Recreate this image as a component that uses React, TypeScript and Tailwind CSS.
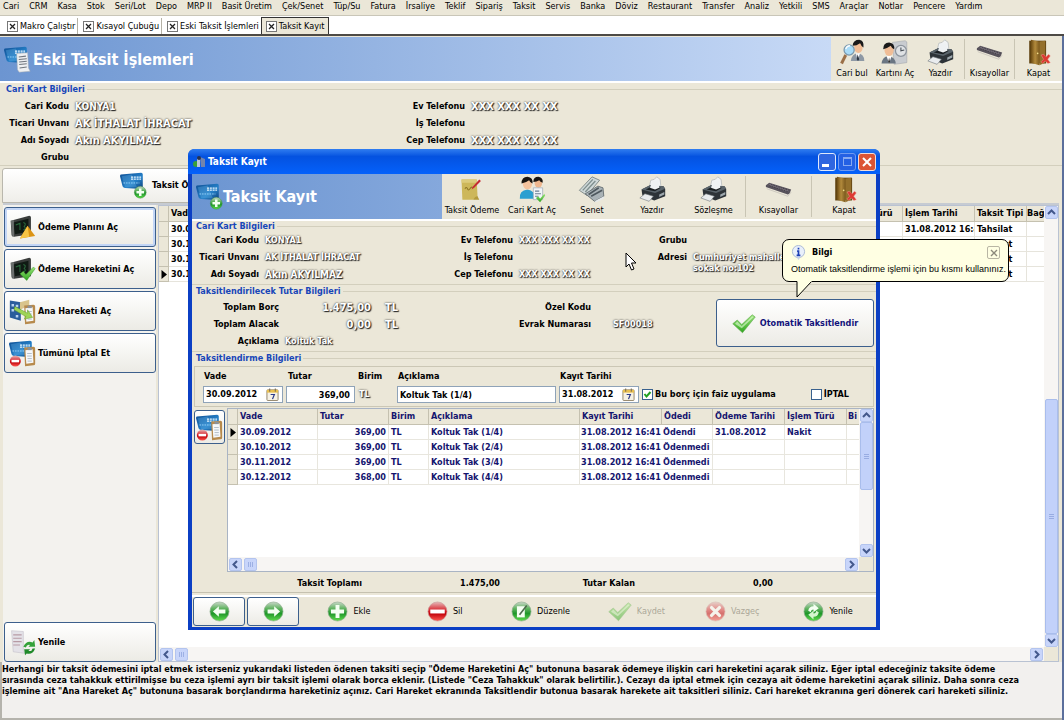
import { useState } from "react";
import type { ReactNode } from "react";
import { clsx } from "clsx";

const MENU = [
  "Cari", "CRM", "Kasa", "Stok", "Seri/Lot", "Depo", "MRP II", "Basit Üretim", "Çek/Senet", "Tüp/Su",
  "Fatura", "İrsaliye", "Teklif", "Sipariş", "Taksit", "Servis", "Banka", "Döviz", "Restaurant",
  "Transfer", "Analiz", "Yetkili", "SMS", "Araçlar", "Notlar", "Pencere", "Yardım",
];

const TABS = ["Makro Çalıştır", "Kısayol Çubuğu", "Eski Taksit İşlemleri", "Taksit Kayıt"];

const INSTALLMENTS = [
  { vade: "30.09.2012", tutar: "369,00", aciklama: "Koltuk Tak (1/4)", odedi: "Ödendi", odeme: "31.08.2012", tur: "Nakit" },
  { vade: "30.10.2012", tutar: "369,00", aciklama: "Koltuk Tak (2/4)", odedi: "Ödenmedi", odeme: "", tur: "" },
  { vade: "30.11.2012", tutar: "369,00", aciklama: "Koltuk Tak (3/4)", odedi: "Ödenmedi", odeme: "", tur: "" },
  { vade: "30.12.2012", tutar: "368,00", aciklama: "Koltuk Tak (4/4)", odedi: "Ödenmedi", odeme: "", tur: "" },
];

/* ---------- icons ---------- */

function Svg({ children, className = "size-[27px]" }: { children: ReactNode; className?: string }) {
  return (
    <svg viewBox="0 0 32 32" className={clsx("shrink-0", className)} aria-hidden="true">
      {children}
    </svg>
  );
}

function Gradients() {
  return (
    <svg className="absolute size-0" aria-hidden="true">
      <defs>
        <linearGradient id="card" x1="0" y1="0" x2="1" y2="1">
          <stop offset="0" stopColor="#0f4f94" />
          <stop offset="0.6" stopColor="#2580c8" />
          <stop offset="1" stopColor="#0d3f78" />
        </linearGradient>
        <linearGradient id="green" x1="0" y1="0" x2="0" y2="1">
          <stop offset="0" stopColor="#c9d6c9" />
          <stop offset="0.35" stopColor="#5fb35f" />
          <stop offset="0.6" stopColor="#1f962a" />
          <stop offset="1" stopColor="#5fdc4c" />
        </linearGradient>
        <linearGradient id="red" x1="0" y1="0" x2="0" y2="1">
          <stop offset="0" stopColor="#e5b9b9" />
          <stop offset="0.45" stopColor="#d8242c" />
          <stop offset="0.6" stopColor="#c00008" />
          <stop offset="1" stopColor="#ff5a52" />
        </linearGradient>
        <linearGradient id="tick" x1="0" y1="0" x2="0" y2="1">
          <stop offset="0" stopColor="#9be57a" />
          <stop offset="1" stopColor="#2fa51f" />
        </linearGradient>
        <linearGradient id="wood" x1="0" y1="0" x2="1" y2="0">
          <stop offset="0" stopColor="#6b4a12" />
          <stop offset="0.5" stopColor="#b28a3c" />
          <stop offset="1" stopColor="#7c5a1e" />
        </linearGradient>
      </defs>
    </svg>
  );
}

function CardShape() {
  return (
    <>
      <path d="M1 3 L25 1 Q27 1 27 3 L27 18 Q27 20 25 20 L6 19 Q4 19 3 17 L0 5 Q0 3 1 3Z" fill="url(#card)" />
      <path d="M2 5 L14 3 L20 18 L6 18Z" fill="#6dbcf0" opacity="0.3" />
      <path d="M13 6 H25 M13 8.500 H25" stroke="#e8f6ff" strokeWidth="1.600" strokeDasharray="2.500 0.800" />
      <path d="M4 13 H23" stroke="#a5dcff" strokeWidth="1" strokeDasharray="2 1" />
    </>
  );
}

function CardAddIcon() {
  return (
    <Svg>
      <CardShape />
      <circle cx="24" cy="24" r="7" fill="url(#green)" stroke="#3c8c3c" strokeWidth="0.500" />
      <path d="M24 19.500 V28.500 M19.500 24 H28.500" stroke="#f2fff0" strokeWidth="3" />
    </Svg>
  );
}

function Sheet() {
  return (
    <>
      <path d="M15 9 L28 8 L29 26 L31 30 L18 31 L16 28Z" fill="#eef0f2" stroke="#a8adb3" strokeWidth="0.600" />
      <path d="M17.500 13 L26 12 M17.500 16 L27 15 M18 19 L27 18 M18 22 L27 21 M18.500 26 L27 25" stroke="#70767e" strokeWidth="1.200" />
    </>
  );
}

function Clipboard() {
  return (
    <>
      <path d="M18 9 L29 8 Q31 8 31 10 L31 28 Q31 30 29 30 L19 31Z" fill="#b78a4c" />
      <path d="M19.500 12 L28 11 L29 27 L20.500 28Z" fill="#f6f8fa" />
      <path d="M22 9 H27 V12 H22Z" fill="#8c9299" />
      <path d="M21.500 16 H27 M21.500 19 H27 M22 22 H27 M22 25 H27" stroke="#a8b4c0" strokeWidth="1" />
    </>
  );
}

function CardSheetIcon() {
  return (
    <Svg>
      <CardShape />
      <Sheet />
    </Svg>
  );
}

function CardCancelIcon() {
  return (
    <Svg>
      <CardShape />
      <Clipboard />
      <circle cx="7.500" cy="25" r="6.500" fill="url(#red)" />
      <path d="M3 25 H12" stroke="#fff" strokeWidth="3" />
    </Svg>
  );
}

function Screen() {
  return (
    <>
      <path d="M2 8 L24 2 Q26 2 26 4 L26 24 L6 27 Q3 27 3 25Z" fill="#3a3d3c" />
      <path d="M5 10 L23 5.500 V21 L7 24Z" fill="#101a14" />
      <path d="M8 13 L13 11 V19 M17 10 Q21 11 18 15 Q21 17 17 19" stroke="#2a6b3d" strokeWidth="1.200" fill="none" />
      <path d="M2 8 L6 7.500 V27 L4 27Z" fill="#8b8f8e" opacity="0.600" />
    </>
  );
}

function ScreenWarnIcon() {
  return (
    <Svg>
      <Screen />
      <path d="M22 14 L31 26 L13 29Z" fill="#dc9414" />
      <path d="M22 14 L24 27 L13 29Z" fill="#f8c444" />
    </Svg>
  );
}

function ScreenTickIcon() {
  return (
    <Svg>
      <Screen />
      <path d="M13 21 L17 18 L20 22 L29 13 L31 15 L21 29Z" fill="url(#tick)" stroke="#2c8a1e" strokeWidth="0.500" />
    </Svg>
  );
}

function MainEntryIcon() {
  return (
    <Svg>
      <path d="M1 3 L14 5 V27 L1 23Z" fill="#2a5c9c" />
      <path d="M3 7 h3 v3 h-3Z M8 8 h3 v3 h-3Z M3 13 h3 v3 h-3Z M8 20 h3 v3 h-3Z" fill="#b7d2f0" />
      <path d="M13 5 L24 2 V9 L13 14Z" fill="#d9c48c" />
      <Clipboard />
      <path d="M7 10 L22 18 V14 L28 23 L18 25 L20 22 L6 14Z" fill="#9ed457" stroke="#5f9c28" strokeWidth="0.600" />
    </Svg>
  );
}

function RefreshSheetIcon() {
  return (
    <Svg>
      <path d="M3 2 L17 3 L17 26 L20 29 L5 27Z" fill="#e4e2e8" stroke="#bdbac4" strokeWidth="0.600" />
      <path d="M5 7 H15 M5 11 H15 M5 15 H15 M5 19 H13" stroke="#b79aa4" strokeWidth="1.400" />
      <path d="M17 21 Q21 13 28 16 L30 13 L31 21 L23 21 L25 19 Q21 18 20 22Z" fill="#35a23a" />
      <path d="M31 23 Q28 31 21 29 L19 31 L18 24 L25 24 L23 26 Q27 27 28 23Z" fill="#218a2b" />
    </Svg>
  );
}

function PersonSearchIcon() {
  return (
    <Svg>
      <path d="M14 26 Q15 18 22 17 Q30 18 30 26Z" fill="#8e99a5" />
      <path d="M20 17 L22 25 L25 17Z" fill="#fff" />
      <path d="M22 18 l-1 6 1.500 2 1.500-2Z" fill="#2b3440" />
      <ellipse cx="23" cy="10" rx="5" ry="6.500" fill="#f0bd96" />
      <path d="M16 8 Q17 1 24 1 Q30 2 29 10 Q26 8 25 5 Q21 8 16 8Z" fill="#191919" />
      <circle cx="12" cy="13" r="6" fill="#a9dcf8" stroke="#7b99ae" strokeWidth="1.500" />
      <path d="M8 12 Q9 8 13 8" stroke="#fff" strokeWidth="1.500" fill="none" />
      <path d="M8 19 L3 29" stroke="#9b7049" strokeWidth="3.500" />
    </Svg>
  );
}

function PersonClockIcon() {
  return (
    <Svg className="h-[27px] w-[30px]">
      <path d="M13 4 L28 2 Q31 3 30 6 V28 L15 30Z" fill="#c9ccd0" stroke="#9da2a8" strokeWidth="0.600" />
      <circle cx="23" cy="14" r="6.500" fill="#dfe2e5" stroke="#8d949c" strokeWidth="1.500" />
      <path d="M23 10 V14 L27 13" stroke="#4a5158" strokeWidth="1.300" fill="none" />
      <path d="M0 29 Q1 21 8 20 Q16 21 17 29Z" fill="#6b7683" />
      <path d="M6 20 L9 29 L12 20Z" fill="#fff" />
      <path d="M9 22 L8 27 L9 29 L10 27Z" fill="#222" />
      <ellipse cx="9" cy="13" rx="5.500" ry="7" fill="#f0bd96" />
      <path d="M2 12 Q2 4 9 4 Q16 5 15 12 Q12 11 11 8 Q7 11 2 12Z" fill="#191919" />
    </Svg>
  );
}

function PeopleIcon() {
  return (
    <Svg>
      <ellipse cx="23" cy="8" rx="4.500" ry="6" fill="#eeb68e" />
      <path d="M17 7 Q17 1 23 1 Q29 2 28 8 Q25 7 24 5 Q21 7 17 7Z" fill="#17130f" />
      <path d="M1 27 Q0 17 10 16 Q19 17 19 27Z" fill="#2b9fd0" />
      <ellipse cx="10" cy="9" rx="5.500" ry="7" fill="#f4c39d" />
      <path d="M3 9 Q3 1 10 1 Q17 2 16 9 Q13 8 12 5 Q8 8 3 9Z" fill="#17130f" />
      <path d="M17 14 H28 V28 H17Z" fill="#f1f4f8" stroke="#9aa7b4" strokeWidth="0.800" />
      <path d="M19 18 H24 M19 21 H26 M19 24 H23" stroke="#6b7d91" strokeWidth="1.400" />
      <path d="M20 26 L23 24 L25 27 L30 21 L31 23 L25 31Z" fill="url(#tick)" />
    </Svg>
  );
}

function PrinterIcon() {
  return (
    <Svg>
      <path d="M12 14 L14 5 L18 4 L21 1 L25 4 L26 13Z" fill="#f1f3f4" stroke="#a7adb1" strokeWidth="0.700" />
      <path d="M3 16 L13 11 L29 12 L31 15 L31 24 L18 29 L4 23Z" fill="#2d3338" />
      <path d="M3 16 L13 11 L29 12 L31 15 L19 20Z" fill="#59636a" />
      <path d="M8 16 L14 13 L26 14 L19 18Z" fill="#1a1f23" />
      <path d="M13 14 L16 6 L23 5 L24 14 L19 16Z" fill="#eef1f3" />
      <path d="M24 22 L30 19 V22 L24 25Z" fill="#9ea8ae" />
      <path d="M1 26 L7 21 L17 24 L12 30Z" fill="#e9ecee" stroke="#6f767b" strokeWidth="0.700" />
    </Svg>
  );
}

function KeyboardIcon() {
  return (
    <Svg>
      <path d="M1 11 L5 8 L31 16 L29 21 L27 22 L1 13Z" fill="#57525b" />
      <path d="M4 11 L6 9 L29 16.500 L27 19Z" fill="#756f79" />
      <path d="M5 11.500 L27 18.500 M7 10 L29 17" stroke="#3c3841" strokeWidth="1" strokeDasharray="2 1" />
      <path d="M2 15 L27 24 L31 19" stroke="#c9c4bb" strokeWidth="1" fill="none" />
    </Svg>
  );
}

function DoorIcon() {
  return (
    <Svg>
      <path d="M5 2 H25 V29 H5Z" fill="#5f4210" />
      <path d="M7 1 L17 3 V31 L7 28Z" fill="url(#wood)" />
      <path d="M17 3 L24 2 V28 L17 31Z" fill="#94702c" />
      <circle cx="15" cy="17" r="1" fill="#f2de8a" />
      <path d="M19 19 L22 18 L25 21 L28 18 L30 20 L27 24 L30 28 L27 29 L24 26 L21 29 L19 27 L22 24Z" fill="#dd3a33" stroke="#f4a49c" strokeWidth="0.500" />
    </Svg>
  );
}

function NoteIcon() {
  return (
    <Svg>
      <path d="M3 4 L21 4 L22 25 L17 28 L4 28Z" fill="#cdb75a" />
      <path d="M3 4 H21 L21 8 H3Z" fill="#dccb7c" />
      <path d="M7 15 q2-3 3 0 t3 0 t3-1" stroke="#8c7424" strokeWidth="1.200" fill="none" />
      <path d="M4 28 H24 L22 24 Q19 24 17 28Z" fill="#b39a3c" />
      <path d="M15 16 L16 13 L24 4 L26 6 L18 14Z" fill="#c52b32" />
    </Svg>
  );
}

function BillIcon() {
  return (
    <Svg className="h-[27px] w-[30px]">
      <path d="M1 17 L16 1 L25 5 L10 23Z" fill="#cfd8d8" stroke="#75807f" strokeWidth="1" />
      <path d="M5 17 L17 4 M8 19 L20 6" stroke="#7f8f8e" strokeWidth="1.600" />
      <path d="M8 21 L23 12 L29 14 L30 24 L19 30Z" fill="#a9b2b6" stroke="#5d666b" strokeWidth="1" />
      <path d="M12 22 L24 14 M15 24 L28 17" stroke="#4e585e" strokeWidth="2" />
      <path d="M19 30 L30 24 V27 L21 31Z" fill="#e5e9ea" />
    </Svg>
  );
}

function TickIcon({ className = "size-[24px]" }: { className?: string }) {
  return (
    <Svg className={className}>
      <path d="M1 17 L7 12 L13 18 L27 5 L31 8 L14 29Z" fill="url(#tick)" stroke="#62a84f" strokeWidth="0.800" />
      <path d="M4 17 L7 14 L13 20 L27 7 L29 8 L13 23Z" fill="#e4fbd8" opacity="0.600" />
    </Svg>
  );
}

function Ball({ tone, children }: { tone: "green" | "red"; children: ReactNode }) {
  return (
    <Svg className="size-[21px]">
      <circle cx="16" cy="16" r="14.500" fill={tone === "green" ? "url(#green)" : "url(#red)"} stroke={tone === "green" ? "#8fae8f" : "#c99"} strokeWidth="1" />
      {children}
    </Svg>
  );
}

const ballIcons = {
  left: <Ball tone="green"><path d="M6 16 L15 8 V13 H25 V19 H15 V24Z" fill="#f4fff2" /></Ball>,
  right: <Ball tone="green"><path d="M26 16 L17 8 V13 H7 V19 H17 V24Z" fill="#f4fff2" /></Ball>,
  add: <Ball tone="green"><path d="M13 6 H19 V13 H26 V19 H19 V26 H13 V19 H6 V13 H13Z" fill="#f4fff2" /></Ball>,
  remove: <Ball tone="red"><path d="M5 13 H27 V19 H5Z" fill="#fff" /></Ball>,
  edit: (
    <Ball tone="green">
      <path d="M9 8 H21 V25 H9Z" fill="#f4fff2" />
      <path d="M13 21 L24 7" stroke="#4c6b4c" strokeWidth="2.500" />
    </Ball>
  ),
  cancel: <Ball tone="red"><path d="M10 10 L22 22 M22 10 L10 22" stroke="#fff" strokeWidth="5" strokeLinecap="round" /></Ball>,
  refresh: (
    <Ball tone="green">
      <path d="M8 15 Q9 8 16 8 V4 L24 11 L16 17 V13 Q12 13 12 17Z" fill="#f4fff2" />
      <path d="M24 17 Q23 24 16 24 V28 L8 21 L16 15 V19 Q20 19 20 15Z" fill="#d5f5cf" />
    </Ball>
  ),
};

function CalendarIcon() {
  return (
    <svg viewBox="0 0 14 14" className="size-[13px] shrink-0" aria-hidden="true">
      <rect x="1" y="2" width="12" height="11.500" rx="1" fill="#f6f1e4" stroke="#8f8064" />
      <rect x="1" y="2" width="12" height="3" fill="#e8bf50" />
      <path d="M4 0.500 V4 M10 0.500 V4" stroke="#6d6250" />
      <path d="M5 7 H9 L7 12" stroke="#2b3a8a" strokeWidth="1.300" fill="none" />
    </svg>
  );
}

/* ---------- small controls ---------- */

const ARROWS = {
  up: "M3 8 L6.500 4.500 L10 8",
  down: "M3 5 L6.500 8.500 L10 5",
  left: "M8 3 L4.500 6.500 L8 10",
  right: "M5 3 L8.500 6.500 L5 10",
};

function ScrollButton({ dir, label }: { dir: keyof typeof ARROWS; label: string }) {
  return (
    <button aria-label={label} className="size-[13px] shrink-0 rounded-[2px] border border-[#b3c4ee] bg-[#c8d5fa]">
      <svg viewBox="0 0 13 13" className="-m-px size-[13px]">
        <path d={ARROWS[dir]} stroke="#43588c" strokeWidth="2" fill="none" />
      </svg>
    </button>
  );
}

function HScroll() {
  return (
    <div className="flex h-[14px] shrink-0 items-center gap-[2px] bg-[#f7f5f3] px-px">
      <ScrollButton dir="left" label="Sola kaydır" />
      <div className="flex h-[13px] w-[13px] items-center justify-center gap-px rounded-[2px] border border-[#b3c4ee] bg-[#c8d5fa]">
        <i className="h-[5px] w-px bg-[#9db0e4]" />
        <i className="h-[5px] w-px bg-[#9db0e4]" />
        <i className="h-[5px] w-px bg-[#9db0e4]" />
      </div>
      <div className="ml-auto flex">
        <ScrollButton dir="right" label="Sağa kaydır" />
      </div>
    </div>
  );
}

function Thumb({ className }: { className: string }) {
  return (
    <div className={clsx("flex w-[13px] flex-col items-center justify-center gap-px rounded-[2px] border border-[#a9bdec] bg-[#c2d1fa]", className)}>
      <i className="h-px w-[5px] bg-[#98ace2]" />
      <i className="h-px w-[5px] bg-[#98ace2]" />
      <i className="h-px w-[5px] bg-[#98ace2]" />
    </div>
  );
}

function ToolButton({ icon, label, className }: { icon: ReactNode; label: string; className: string }) {
  return (
    <button className={clsx("flex flex-col items-center gap-[2px] pt-[2px] whitespace-nowrap", className)}>
      {icon}
      <span>{label}</span>
    </button>
  );
}

function Separator() {
  return <div className="my-[2px] w-px shrink-0 bg-[#c9c5b4]" />;
}

// White lettering that stands off the panel with a dark soft shadow
function Glow({ children, className }: { children: ReactNode; className?: string }) {
  return (
    <span className={clsx("font-bold whitespace-nowrap text-white [text-shadow:1px_1px_1px_#222,0_0_2px_#222]", className)}>
      {children}
    </span>
  );
}

function Group({ title, children, className }: { title: string; children: ReactNode; className?: string }) {
  return (
    <section className={clsx("relative shrink-0", className)}>
      <div className="flex h-[11px] items-center gap-[2px] pl-1">
        <h2 className="font-bold text-[#1746b8]">{title}</h2>
        <div className="h-px flex-1 bg-[#d3cfbd]" />
      </div>
      {children}
    </section>
  );
}

const FRAME = "rounded-[3px] border border-[#3c5f8c] bg-gradient-to-b from-white to-[#ecebe5]";

function SideButton({ icon, label, active }: { icon: ReactNode; label: string; active?: boolean }) {
  return (
    <button
      className={clsx(
        FRAME,
        "flex h-[40px] w-full shrink-0 items-center gap-[2px] pl-[4px] font-bold",
        active && "shadow-[inset_0_0_0_2px_#c3d6f6]"
      )}
    >
      {icon}
      {label}
    </button>
  );
}

/* ---------- background screen ---------- */

function MainHeader() {
  return (
    <header className="flex h-[46px] shrink-0 border-b-2 border-white">
      <div className="flex flex-1 items-center gap-[2px] bg-gradient-to-r from-[#6c95d1] to-[#c8daf6] pl-1">
        <CardSheetIcon />
        <h1 className="text-[16px] font-bold text-white">Eski Taksit İşlemleri</h1>
      </div>
      <ToolButton className="w-[42px]" icon={<PersonSearchIcon />} label="Cari bul" />
      <ToolButton className="w-[44px]" icon={<PersonClockIcon />} label="Kartını Aç" />
      <ToolButton className="w-[47px]" icon={<PrinterIcon />} label="Yazdır" />
      <Separator />
      <ToolButton className="w-[49px]" icon={<KeyboardIcon />} label="Kısayollar" />
      <Separator />
      <ToolButton className="w-[47px]" icon={<DoorIcon />} label="Kapat" />
    </header>
  );
}

function RowMarker() {
  return (
    <svg viewBox="0 0 6 9" className="mx-auto h-[9px] w-[6px]" aria-hidden="true">
      <path d="M0.500 0 L6 4.500 L0.500 9Z" fill="#000" />
    </svg>
  );
}

function MainTable() {
  const head = "h-[16px] overflow-hidden border-r border-b border-[#c5c1b0] bg-[#ebe7d8] px-[2px] text-left font-bold";
  const cell = "h-[15px] overflow-hidden border-r border-b border-[#e6e4dc] px-[2px]";
  return (
    <table className="w-full table-fixed border-separate border-spacing-0 font-bold whitespace-nowrap">
      <colgroup>
        <col className="w-[10px]" />
        <col className="w-[80px]" />
        <col />
        <col className="w-[60px]" />
        <col className="w-[72px]" />
        <col className="w-[52px]" />
        <col className="w-[17px]" />
      </colgroup>
      <thead>
        <tr>
          <th className={head} />
          <th className={head}>Vade</th>
          <th className={head} />
          <th className={head}>İşlem Türü</th>
          <th className={head}>İşlem Tarihi</th>
          <th className={head}>Taksit Tipi</th>
          <th className="h-[16px] overflow-hidden border-b border-[#c5c1b0] bg-[#ebe7d8] p-0 text-left">Bağ</th>
        </tr>
      </thead>
      <tbody>
        {INSTALLMENTS.map((row, i) => (
          <tr key={row.vade}>
            <td className="h-[15px] border-r border-b border-[#c5c1b0] bg-[#ebe7d8] p-0">
              {i === 3 && <RowMarker />}
            </td>
            <td className={cell}>{row.vade}</td>
            <td className={cell} />
            <td className={cell} />
            <td className={cell}>31.08.2012 16:41</td>
            <td className={cell}>Tahsilat</td>
            <td className="border-b border-[#e6e4dc]" />
          </tr>
        ))}
      </tbody>
    </table>
  );
}

function CustomerInfo() {
  return (
    <Group title="Cari Kart Bilgileri" className="h-[83px] border-b border-[#d3cfbd] pt-px pl-[2px]">
      <div className="grid grid-cols-[67px_322px_62px_1fr] gap-x-[6px] pt-[3px] text-right leading-[17px] font-bold">
        <span>Cari Kodu</span>
        <Glow className="text-left text-[10px]">KONYA1</Glow>
        <span className="justify-self-end whitespace-nowrap">Ev Telefonu</span>
        <Glow className="text-left text-[11px]">XXX XXX XX XX</Glow>
        <span className="justify-self-end whitespace-nowrap">Ticari Unvanı</span>
        <Glow className="text-left text-[11px]">AK İTHALAT İHRACAT</Glow>
        <span className="justify-self-end whitespace-nowrap">İş Telefonu</span>
        <span />
        <span>Adı Soyadı</span>
        <Glow className="text-left text-[11px]">Akın AKYILMAZ</Glow>
        <span className="justify-self-end whitespace-nowrap">Cep Telefonu</span>
        <Glow className="text-left text-[11px]">XXX XXX XX XX</Glow>
        <span>Grubu</span>
      </div>
    </Group>
  );
}

/* ---------- Taksit Kayıt window ---------- */

function ModalTitle() {
  const box = "flex size-[18px] items-center justify-center rounded-[3px] border";
  return (
    <div className="flex h-[25px] shrink-0 items-center gap-[2px] rounded-t-[6px] bg-gradient-to-b from-[#2f7df0] via-[#0452e0] via-30% to-[#0461fb] pr-[4px] pl-1">
      <svg viewBox="0 0 14 14" className="size-[14px]" aria-hidden="true">
        <circle cx="4" cy="9" r="3" fill="#3aa03a" />
        <path d="M5 12 V4 L8 2 V12Z" fill="#b9c7dd" />
        <path d="M8 2 L13 4 V12 H9Z" fill="#7384ac" />
        <circle cx="7" cy="3" r="2" fill="#27324e" />
      </svg>
      <h2 className="flex-1 text-[10px] font-bold text-white">Taksit Kayıt</h2>
      <button aria-label="Simge durumuna küçült" className={clsx(box, "border-[#dfe8fb] bg-[#2f66e0]")}>
        <i className="mt-[7px] -ml-[3px] h-[3px] w-[7px] bg-white" />
      </button>
      <button aria-label="Ekranı kapla" className={clsx(box, "border-[#6f9af0] bg-[#2460e4]")}>
        <i className="size-[9px] border border-t-2 border-[#86a9f2]" />
      </button>
      <button aria-label="Pencereyi kapat" className={clsx(box, "border-[#f3dcd6] bg-[#dc5535]")}>
        <svg viewBox="0 0 12 12" className="size-[12px]">
          <path d="M2 2 L10 10 M10 2 L2 10" stroke="#fff" strokeWidth="2" />
        </svg>
      </button>
    </div>
  );
}

function ModalHeader() {
  return (
    <div className="flex h-[47px] shrink-0 border-b-2 border-white">
      <div className="flex flex-1 items-center bg-gradient-to-r from-[#6c95d1] to-[#85a8dc] pl-1">
        <CardAddIcon />
        <h2 className="text-[16px] font-bold text-white">Taksit Kayıt</h2>
      </div>
      <ToolButton className="w-[60px]" icon={<NoteIcon />} label="Taksit Ödeme" />
      <ToolButton className="w-[60px]" icon={<PeopleIcon />} label="Cari Kart Aç" />
      <ToolButton className="w-[60px]" icon={<BillIcon />} label="Senet" />
      <ToolButton className="w-[60px]" icon={<PrinterIcon />} label="Yazdır" />
      <ToolButton className="w-[63px]" icon={<PrinterIcon />} label="Sözleşme" />
      <Separator />
      <ToolButton className="w-[65px]" icon={<KeyboardIcon />} label="Kısayollar" />
      <Separator />
      <ToolButton className="w-[64px]" icon={<DoorIcon />} label="Kapat" />
    </div>
  );
}

function AmountInfo() {
  return (
    <Group title="Taksitlendirilecek Tutar Bilgileri" className="mb-px h-[66px] border-b border-[#d3cfbd]">
      <div className="flex pt-[2px] font-bold">
        <div className="grid w-[320px] grid-cols-[87px_86px_1fr] items-center gap-x-[6px] text-right leading-[17px]">
          <span>Toplam Borç</span>
          <Glow className="text-[11px]">1.475,00</Glow>
          <Glow className="pl-[8px] text-left text-[11px]">TL</Glow>
          <span>Toplam Alacak</span>
          <Glow className="text-[11px]">0,00</Glow>
          <Glow className="pl-[8px] text-left text-[11px]">TL</Glow>
          <span>Açıklama</span>
          <Glow className="text-left">Koltuk Tak</Glow>
        </div>
        <div className="grid w-[200px] grid-cols-[79px_1fr] content-start gap-x-[22px] text-right leading-[17px]">
          <span>Özel Kodu</span>
          <span />
          <span className="whitespace-nowrap">Evrak Numarası</span>
          <Glow className="text-left">SF00018</Glow>
        </div>
        <button className={clsx(FRAME, "mr-[2px] ml-auto flex h-[48px] w-[158px] items-center justify-center gap-[4px] text-[#12127a]")}>
          <TickIcon />
          Otomatik Taksitlendir
        </button>
      </div>
    </Group>
  );
}

const INPUT = "h-[17px] border border-[#8fa3b8] bg-white px-[2px] font-bold outline-none";

function DateInput({ id, value }: { id: string; value: string }) {
  return (
    <div className="flex h-[17px] w-[80px] items-center border border-[#8fa3b8] bg-white pr-[3px]">
      <input id={id} defaultValue={value} className="w-full min-w-0 px-[2px] font-bold outline-none" />
      <CalendarIcon />
    </div>
  );
}

function Check({ label, checked }: { label: string; checked?: boolean }) {
  return (
    <label className="flex h-[17px] items-center gap-[2px] font-bold whitespace-nowrap">
      <span className="relative size-[11px]">
        <input type="checkbox" defaultChecked={checked} className="peer block size-[11px] appearance-none border border-[#39618e] bg-white" />
        <svg viewBox="0 0 11 11" className="pointer-events-none absolute inset-0 hidden size-[11px] peer-checked:block">
          <path d="M2.500 5 L4.500 7.500 L8.500 3" stroke="#21a121" strokeWidth="2" fill="none" />
        </svg>
      </span>
      {label}
    </label>
  );
}

function InstallmentForm() {
  return (
    <div className="mx-[2px] mt-[2px] flex h-[41px] shrink-0 items-end gap-[3px] border border-[#cbc7b5] pb-[3px] pl-[8px] font-bold">
      <div className="flex flex-col gap-[4px]">
        <label htmlFor="vade" className="pl-px">Vade</label>
        <DateInput id="vade" value="30.09.2012" />
      </div>
      <div className="flex flex-col gap-[4px]">
        <label htmlFor="tutar" className="pl-[2px]">Tutar</label>
        <input id="tutar" defaultValue="369,00" className={clsx(INPUT, "w-[69px] pr-[4px] text-right")} />
      </div>
      <div className="flex w-[36px] flex-col gap-[4px]">
        <span>Birim</span>
        <Glow className="h-[17px] pl-px leading-[17px]">TL</Glow>
      </div>
      <div className="flex flex-1 flex-col gap-[4px]">
        <label htmlFor="aciklama" className="pl-px">Açıklama</label>
        <input id="aciklama" defaultValue="Koltuk Tak (1/4)" className={clsx(INPUT, "w-full")} />
      </div>
      <div className="flex flex-col gap-[4px]">
        <label htmlFor="kayit" className="pl-px">Kayıt Tarihi</label>
        <DateInput id="kayit" value="31.08.2012" />
      </div>
      <Check label="Bu borç için faiz uygulama" checked />
      <div className="mr-[24px] ml-[32px]">
        <Check label="İPTAL" />
      </div>
    </div>
  );
}

function InstallmentTable() {
  const head = "h-[16px] overflow-hidden border-r border-b border-[#c5c1b0] bg-[#ebe7d8] px-[2px] text-left";
  const cell = "h-[15px] border-r border-b border-[#e8e6de] px-[2px]";
  return (
    <table className="w-full table-fixed border-separate border-spacing-0 font-bold whitespace-nowrap text-[#14146e]">
      <colgroup>
        <col className="w-[10px]" />
        <col className="w-[80px]" />
        <col className="w-[71px]" />
        <col className="w-[40px]" />
        <col />
        <col className="w-[82px]" />
        <col className="w-[51px]" />
        <col className="w-[72px]" />
        <col className="w-[62px]" />
        <col className="w-[12px]" />
      </colgroup>
      <thead>
        <tr>
          <th className={head} />
          <th className={head}>Vade</th>
          <th className={head}>Tutar</th>
          <th className={head}>Birim</th>
          <th className={head}>Açıklama</th>
          <th className={head}>Kayıt Tarihi</th>
          <th className={head}>Ödedi</th>
          <th className={head}>Ödeme Tarihi</th>
          <th className={head}>İşlem Türü</th>
          <th className="h-[16px] overflow-hidden border-b border-[#c5c1b0] bg-[#ebe7d8] p-0 pl-px text-left">Bi</th>
        </tr>
      </thead>
      <tbody>
        {INSTALLMENTS.map((row, i) => (
          <tr key={row.vade}>
            <td className="h-[15px] border-r border-b border-[#c5c1b0] bg-[#ebe7d8] p-0">
              {i === 0 && <RowMarker />}
            </td>
            <td className={cell}>{row.vade}</td>
            <td className={clsx(cell, "text-right")}>{row.tutar}</td>
            <td className={cell}>TL</td>
            <td className={cell}>{row.aciklama}</td>
            <td className="border-b border-[#e8e6de] p-0 pl-px">31.08.2012 16:41</td>
            <td className="border-r border-b border-[#e8e6de] p-0 pl-px">{row.odedi}</td>
            <td className={cell}>{row.odeme}</td>
            <td className={cell}>{row.tur}</td>
            <td className="border-b border-[#e8e6de] p-0" />
          </tr>
        ))}
      </tbody>
    </table>
  );
}

function NavBar() {
  const actions = [
    { label: "Ekle", icon: ballIcons.add },
    { label: "Sil", icon: ballIcons.remove },
    { label: "Düzenle", icon: ballIcons.edit },
    { label: "Kaydet", icon: <TickIcon />, disabled: true },
    { label: "Vazgeç", icon: ballIcons.cancel, disabled: true },
    { label: "Yenile", icon: ballIcons.refresh },
  ];
  return (
    <div className="flex h-[32px] shrink-0 gap-[2px] border-t-2 border-white pl-px">
      <button aria-label="Önceki" className={clsx(FRAME, "flex h-[29px] w-[52px] items-center justify-center")}>
        {ballIcons.left}
      </button>
      <button aria-label="Sonraki" className={clsx(FRAME, "flex h-[29px] w-[52px] items-center justify-center")}>
        {ballIcons.right}
      </button>
      <div className="flex flex-1 pb-[2px]">
        {actions.map((a) => (
          <button
            key={a.label}
            disabled={a.disabled}
            className="flex flex-1 items-center justify-center gap-[5px] disabled:text-[#aca899] disabled:[&>svg]:opacity-50"
          >
            {a.icon}
            {a.label}
          </button>
        ))}
      </div>
    </div>
  );
}

function TaksitKayit() {
  return (
    <div role="dialog" aria-label="Taksit Kayıt" className="absolute top-[149px] left-[188px] flex h-[481px] w-[692px] flex-col rounded-t-[7px] bg-[#0b3fc4]">
      <ModalTitle />
      <div className="mr-[4px] mb-[3px] ml-[4px] flex min-h-0 flex-1 flex-col bg-[#ebe7d8]">
        <ModalHeader />
        <Group title="Cari Kart Bilgileri" className="mb-px h-[64px] border-b border-[#d3cfbd]">
          <div className="flex font-bold">
            <div className="grid w-[255px] grid-cols-[67px_1fr] gap-x-[6px] text-right leading-[17px]">
              <span>Cari Kodu</span>
              <Glow className="text-left">KONYA1</Glow>
              <span className="justify-self-end whitespace-nowrap">Ticari Unvanı</span>
              <Glow className="text-left">AK İTHALAT İHRACAT</Glow>
              <span>Adı Soyadı</span>
              <Glow className="text-left text-[10px]">Akın AKYILMAZ</Glow>
            </div>
            <div className="grid w-[200px] grid-cols-[66px_1fr] content-start gap-x-[6px] text-right leading-[17px]">
              <span>Ev Telefonu</span>
              <Glow className="text-left">XXX XXX XX XX</Glow>
              <span>İş Telefonu</span>
              <span />
              <span>Cep Telefonu</span>
              <Glow className="text-left">XXX XXX XX XX</Glow>
            </div>
            <div className="grid grid-cols-[40px_1fr] content-start gap-x-[6px] text-right leading-[17px]">
              <span>Grubu</span>
              <span />
              <span>Adresi</span>
              <Glow className="pt-[3px] text-left leading-[11px]">
                Cumhuriyet mahallesi
                <br />
                sokak no:102
              </Glow>
            </div>
          </div>
        </Group>
        <AmountInfo />
        <Group title="Taksitlendirme Bilgileri">
          <InstallmentForm />
        </Group>
        <div className="mt-px mr-[2px] flex min-h-0 flex-1">
          <div className="w-[36px] shrink-0 border-r border-[#a9b4c4] pt-[2px] pl-[2px]">
            <button aria-label="Taksiti iptal et" className={clsx(FRAME, "flex h-[34px] w-[31px] items-center justify-center")}>
              <CardCancelIcon />
            </button>
          </div>
          <div className="flex min-w-0 flex-1 flex-col border-t border-r border-b border-[#a9b4c4] bg-white">
            <div className="flex min-h-0 flex-1">
              <div className="min-w-0 flex-1">
                <InstallmentTable />
              </div>
              <div className="flex w-[14px] flex-col items-center bg-[#f7f5f3]">
                <ScrollButton dir="up" label="Yukarı kaydır" />
                <Thumb className="h-[68px]" />
                <div className="mt-auto flex">
                  <ScrollButton dir="down" label="Aşağı kaydır" />
                </div>
              </div>
            </div>
            <div className="bg-[#ebe7d8] pr-[14px]">
              <HScroll />
            </div>
          </div>
        </div>
        <div className="grid h-[21px] shrink-0 grid-cols-[170px_138px_135px_138px] items-center border-b border-[#c5c1b0] pt-[2px] text-right font-bold">
          <span>Taksit Toplamı</span>
          <span>1.475,00</span>
          <span>Tutar Kalan</span>
          <span>0,00</span>
        </div>
        <div className="h-[2px] shrink-0" />
        <NavBar />
      </div>
    </div>
  );
}

function InfoBalloon({ onClose }: { onClose: () => void }) {
  return (
    <div role="status" className="absolute top-[239px] left-[782px] w-[227px] rounded-[7px] border border-black bg-[#ffffe3] px-[8px] pt-[5px] pb-[6px]">
      <div className="flex items-center gap-[6px]">
        <svg viewBox="0 0 16 16" className="size-[15px]" aria-hidden="true">
          <circle cx="8" cy="7" r="6.500" fill="#e9f0fb" stroke="#a9b8d4" />
          <path d="M6 13 L8 16 L10 13Z" fill="#c5d2ea" />
          <path d="M8 3 V4.800 M6.500 6.500 H8 V11 M6 11 H10" stroke="#1c3fb4" strokeWidth="1.800" fill="none" />
        </svg>
        <strong className="flex-1">Bilgi</strong>
        <button aria-label="Kapat" onClick={onClose} className="flex size-[13px] items-center justify-center rounded-[2px] border border-[#b9b6a4]">
          <svg viewBox="0 0 8 8" className="size-[8px]">
            <path d="M1 1 L7 7 M7 1 L1 7" stroke="#8d8a7c" strokeWidth="1.400" />
          </svg>
        </button>
      </div>
      <p className="mt-[4px] font-['Liberation_Sans',sans-serif] whitespace-nowrap">
        Otomatik taksitlendirme işlemi için bu kısmı kullanınız.
      </p>
      <svg viewBox="0 0 18 18" className="absolute top-full left-[13px] size-[18px]" aria-hidden="true">
        <path d="M1 0 V16 L16 0" fill="#ffffe3" stroke="#000" />
        <path d="M1.500 0 H15.500" stroke="#ffffe3" strokeWidth="2" />
      </svg>
    </div>
  );
}

function Cursor() {
  return (
    <svg viewBox="0 0 12 19" className="absolute top-[252px] left-[625px] h-[19px] w-[12px]" aria-hidden="true">
      <path d="M1 1 V15 L4 12 L6.500 18 L9 17 L6.500 11 H11Z" fill="#fff" stroke="#000" />
    </svg>
  );
}

export default function App() {
  const [activeTab, setActiveTab] = useState("Taksit Kayıt");
  const [showInfo, setShowInfo] = useState(true);

  return (
    <div className="relative flex min-h-screen flex-col overflow-hidden bg-[#ebe7d8] font-['DejaVu_Sans_Condensed','DejaVu_Sans',sans-serif] text-[9px] leading-[11px] text-black">
      <Gradients />

      <nav className="flex h-[16px] shrink-0 gap-[10px] border-b border-[#c9c6b8] pl-[3px] whitespace-nowrap">
        {MENU.map((item) => (
          <button key={item} className="h-[12px]">
            {item}
          </button>
        ))}
      </nav>

      <div className="flex h-[20px] shrink-0 items-end border-b-2 border-[#4d4a45] bg-white pl-[2px]">
        {TABS.map((tab, i) => (
          <button
            key={tab}
            onClick={() => setActiveTab(tab)}
            className={clsx(
              "flex items-center gap-[2px] whitespace-nowrap",
              activeTab === tab
                ? "h-[17px] border border-b-0 border-[#333] bg-[#ebe7d8] px-[4px]"
                : "h-[16px] pr-[2px] pl-[5px]",
              activeTab !== tab && i < 2 && "border-r border-[#b5b2a6]"
            )}
          >
            <svg viewBox="0 0 11 11" className="size-[11px]" aria-hidden="true">
              <rect x="0.500" y="0.500" width="10" height="10" fill="#fff" stroke="#777" />
              <path d="M3 3 L8 8 M8 3 L3 8" stroke="#222" strokeWidth="1.300" />
            </svg>
            {tab}
          </button>
        ))}
      </div>

      <div className="flex flex-1 flex-col border-r-2 border-[#5b6f9c] pt-px">
        <MainHeader />
        <CustomerInfo />

        <div className="h-[37px] shrink-0 pt-[2px] pl-[2px]">
          <button className="flex h-[35px] w-[700px] items-center gap-[5px] rounded-t-[3px] border border-[#b9b7ad] bg-gradient-to-b from-white to-[#efeee9] pl-[117px] font-bold">
            <CardAddIcon />
            Taksit Ödemeleri
          </button>
        </div>

        <main className="mx-[3px] flex min-h-0 flex-1 gap-[2px] border-t-2 border-[#c6cbd2]">
          <aside className="flex w-[153px] shrink-0 flex-col gap-[2px] bg-[#f3f2ee] pt-[2px] pl-px">
            <SideButton active icon={<ScreenWarnIcon />} label="Ödeme Planını Aç" />
            <SideButton icon={<ScreenTickIcon />} label="Ödeme Hareketini Aç" />
            <SideButton icon={<MainEntryIcon />} label="Ana Hareketi Aç" />
            <SideButton icon={<CardCancelIcon />} label="Tümünü İptal Et" />
            <div className="mt-auto">
              <SideButton icon={<RefreshSheetIcon />} label="Yenile" />
            </div>
          </aside>
          <div className="flex min-w-0 flex-1 flex-col border border-[#b9c2d2] bg-white">
            <div className="flex min-h-0 flex-1">
              <div className="min-w-0 flex-1">
                <MainTable />
              </div>
              <div className="flex w-[14px] flex-col items-center bg-[#f7f5f3]">
                <ScrollButton dir="up" label="Yukarı kaydır" />
                <Thumb className="mt-auto h-[235px]" />
                <ScrollButton dir="down" label="Aşağı kaydır" />
              </div>
            </div>
            <div className="bg-[#ebe7d8] pr-[14px]">
              <HScroll />
            </div>
          </div>
        </main>

        <footer className="h-[58px] shrink-0 border-b-2 border-l-2 border-[#b5b3ac] bg-[#f2f0ee] pt-[2px] pr-[32px] font-bold">
          Herhangi bir taksit ödemesini iptal etmek isterseniz yukarıdaki listeden ödenen taksiti seçip "Ödeme Hareketini Aç" butonuna basarak ödemeye ilişkin cari hareketini açarak siliniz. Eğer iptal edeceğiniz taksite ödeme sırasında ceza tahakkuk ettirilmişse bu ceza işlemi ayrı bir taksit işlemi olarak borca eklenir. (Listede "Ceza Tahakkuk" olarak belirtilir.). Cezayı da iptal etmek için cezaya ait ödeme hareketini açarak siliniz. Daha sonra ceza işlemine ait "Ana Hareket Aç" butonuna basarak borçlandırma hareketiniz açınız. Cari Hareket ekranında Taksitlendir butonua basarak harekete ait taksitleri siliniz. Cari hareket ekranına geri dönerek cari hareketi siliniz.
        </footer>
      </div>

      <TaksitKayit />
      <Cursor />
      {showInfo && <InfoBalloon onClose={() => setShowInfo(false)} />}
    </div>
  );
}
